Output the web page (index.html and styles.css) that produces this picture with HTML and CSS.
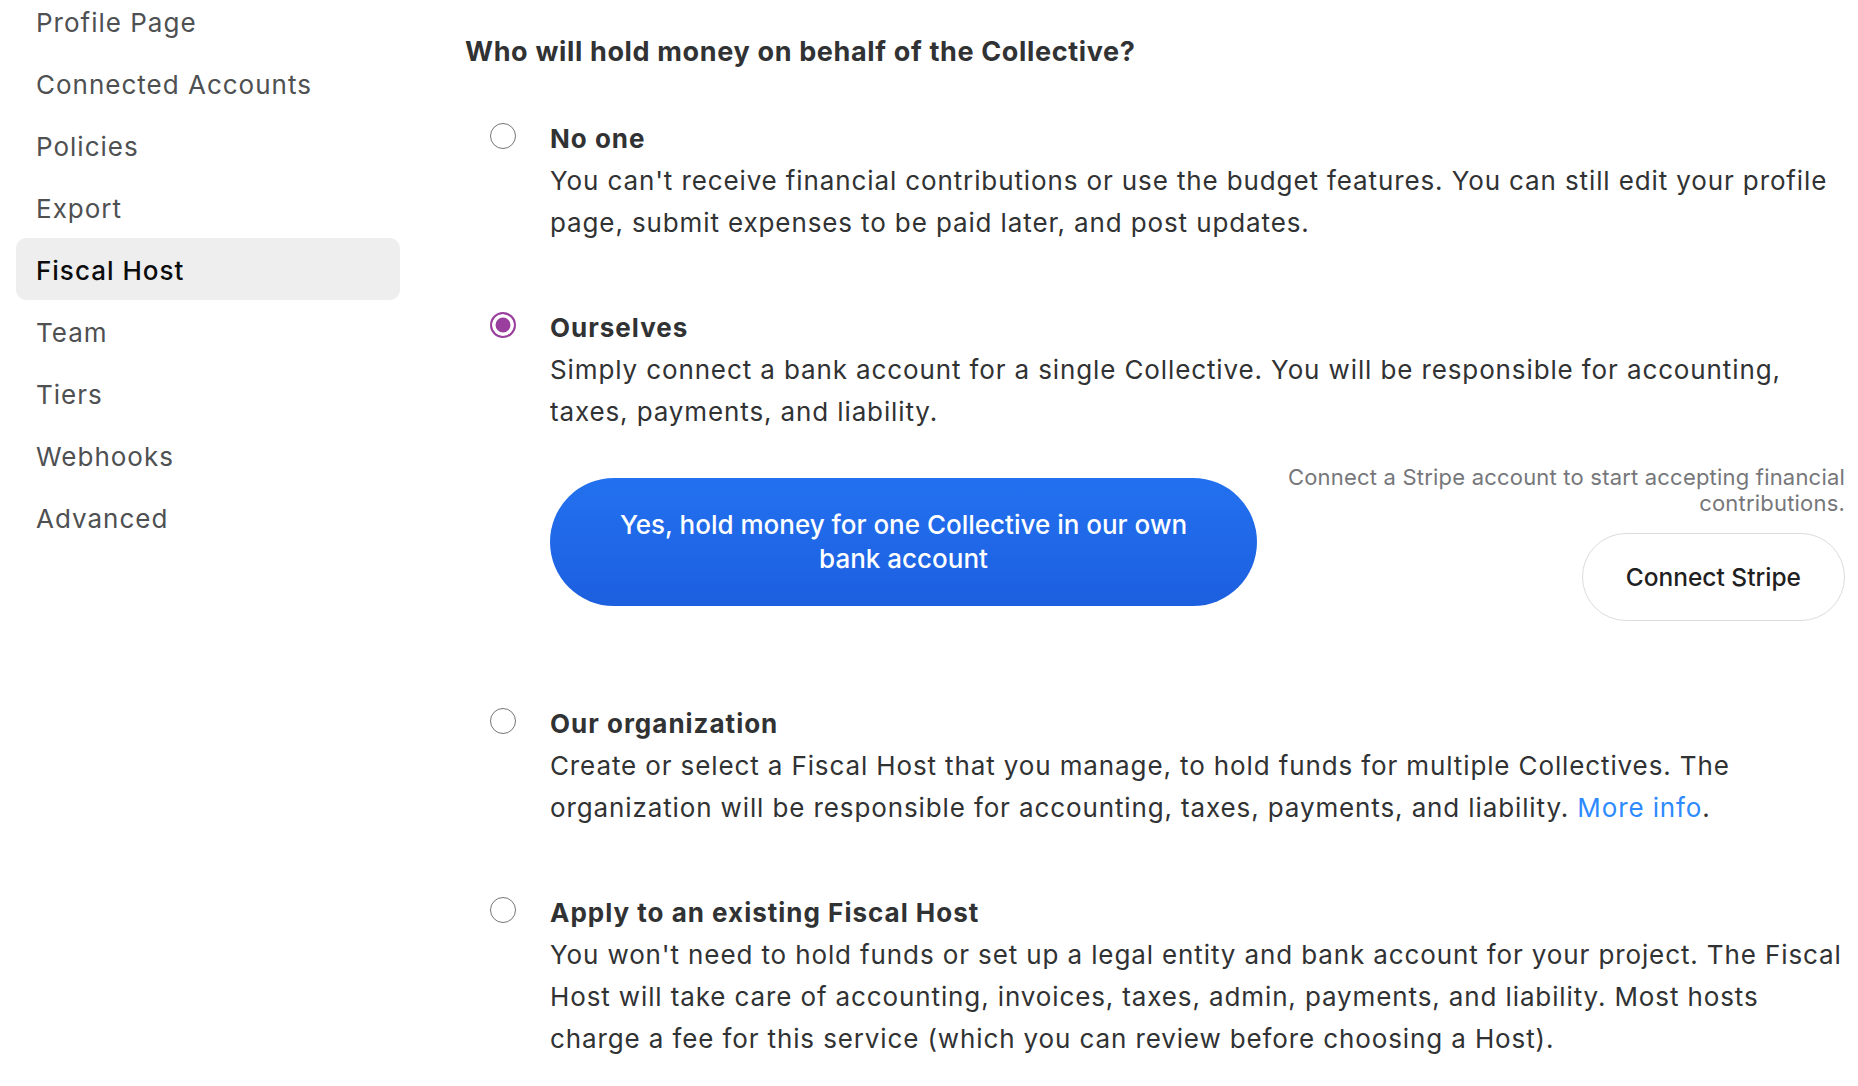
FILE: index.html
```html
<!DOCTYPE html>
<html lang="en">
<head>
<meta charset="utf-8">
<title>Fiscal Host</title>
<link rel="stylesheet" href="styles.css">
</head>
<body>
<div class="layout">
  <aside class="sidebar">
    <nav class="nav">
      <a class="nav-item" href="#">Profile Page</a>
      <a class="nav-item" href="#">Connected Accounts</a>
      <a class="nav-item" href="#">Policies</a>
      <a class="nav-item" href="#">Export</a>
      <a class="nav-item active" href="#">Fiscal Host</a>
      <a class="nav-item" href="#">Team</a>
      <a class="nav-item" href="#">Tiers</a>
      <a class="nav-item" href="#">Webhooks</a>
      <a class="nav-item" href="#">Advanced</a>
    </nav>
  </aside>
  <main class="content">
    <h2 class="question">Who will hold money on behalf of the Collective?</h2>
    <div class="options">
      <label class="option">
        <input class="radio" type="radio" name="host">
        <div class="option-body">
          <div class="option-title">No one</div>
          <p class="option-desc">You can't receive financial contributions or use the budget features. You can still edit your profile page, submit expenses to be paid later, and post updates.</p>
        </div>
      </label>
      <label class="option">
        <input class="radio" type="radio" name="host" checked>
        <div class="option-body">
          <div class="option-title">Ourselves</div>
          <p class="option-desc">Simply connect a bank account for a single Collective. You will be responsible for accounting, taxes, payments, and liability.</p>
          <div class="actions">
            <button class="btn-primary" type="button">Yes, hold money for one Collective in our own bank account</button>
            <div class="stripe">
              <p class="stripe-note">Connect a Stripe account to start accepting financial contributions.</p>
              <button class="btn-secondary" type="button">Connect Stripe</button>
            </div>
          </div>
        </div>
      </label>
      <label class="option">
        <input class="radio" type="radio" name="host">
        <div class="option-body">
          <div class="option-title">Our organization</div>
          <p class="option-desc">Create or select a Fiscal Host that you manage, to hold funds for multiple Collectives. The organization will be responsible for accounting, taxes, payments, and liability. <a class="link" href="#">More info</a>.</p>
        </div>
      </label>
      <label class="option">
        <input class="radio" type="radio" name="host">
        <div class="option-body">
          <div class="option-title">Apply to an existing Fiscal Host</div>
          <p class="option-desc">You won't need to hold funds or set up a legal entity and bank account for your project. The Fiscal Host will take care of accounting, invoices, taxes, admin, payments, and liability. Most hosts charge a fee for this service (which you can review before choosing a Host).</p>
        </div>
      </label>
    </div>
  </main>
</div>
</body>
</html>
```

FILE: styles.css
```css
html, body {
  margin: 0;
  padding: 0;
  background: #ffffff;
}

body {
  font-family: Inter, "Noto Sans", sans-serif;
  color: #313233;
  overflow: hidden;
}

.layout {
  display: flex;
  align-items: flex-start;
}

.sidebar {
  flex: none;
  width: 400px;
  padding-left: 16px;
  box-sizing: border-box;
  margin-top: -10px;
}

.nav {
  display: flex;
  flex-direction: column;
}

.nav-item {
  display: block;
  padding: 14px 0 10px 20px;
  line-height: 38px;
  font-size: 26px;
  letter-spacing: 1px;
  color: #4e5052;
  text-decoration: none;
  border-radius: 10px;
}

.nav-item.active {
  background: #eeeeee;
  color: #0c0c0d;
  font-weight: 500;
}

.content {
  flex: 1;
  min-width: 0;
  padding: 0 13px 0 65px;
}

.question {
  margin: 34px 0 49px;
  font-size: 27px;
  line-height: 36px;
  font-weight: 700;
  letter-spacing: 0.65px;
  color: #313233;
}

.options {
  display: flex;
  flex-direction: column;
  gap: 64px;
}

.option {
  display: flex;
  align-items: flex-start;
  gap: 34px;
  padding-left: 25px;
}

.radio {
  appearance: none;
  -webkit-appearance: none;
  flex: none;
  width: 26px;
  height: 26px;
  margin: 4px 0 0;
  border: 1.5px solid #767676;
  border-radius: 50%;
  background: #ffffff;
  box-sizing: border-box;
}

.radio:checked {
  border: 2px solid #9a3f9e;
  background: #9a3f9e;
  box-shadow: inset 0 0 0 3.5px #ffffff;
}

.option-body {
  flex: 1;
  min-width: 0;
}

.option-title {
  font-size: 26px;
  line-height: 40px;
  font-weight: 700;
  letter-spacing: 1px;
  color: #313233;
}

.option-desc {
  margin: 1px 0 0;
  font-size: 26px;
  line-height: 42px;
  letter-spacing: 0.88px;
  color: #313233;
}

.link {
  color: #2d8aff;
  text-decoration: none;
}

.actions {
  display: flex;
  justify-content: space-between;
  align-items: flex-start;
  margin: 31px 0 19px;
}

.btn-primary {
  flex: none;
  width: 707px;
  margin-top: 14px;
  padding: 30px 48px;
  border: none;
  border-radius: 64px;
  background: linear-gradient(180deg, #2371f0 0%, #1c5fdf 100%);
  color: #ffffff;
  font-family: inherit;
  font-size: 26px;
  line-height: 34px;
  font-weight: 500;
  text-align: center;
}

.stripe {
  display: flex;
  flex-direction: column;
  align-items: flex-end;
  width: 560px;
}

.stripe-note {
  margin: 0;
  font-size: 22px;
  line-height: 26px;
  letter-spacing: 0.2px;
  color: #76777a;
  text-align: right;
}

.btn-secondary {
  margin-top: 17px;
  height: 88px;
  padding: 0 43px;
  border: 1.5px solid #dcdcdc;
  border-radius: 44px;
  background: #ffffff;
  color: #1f2021;
  font-family: inherit;
  font-size: 24.5px;
  font-weight: 500;
}
```
